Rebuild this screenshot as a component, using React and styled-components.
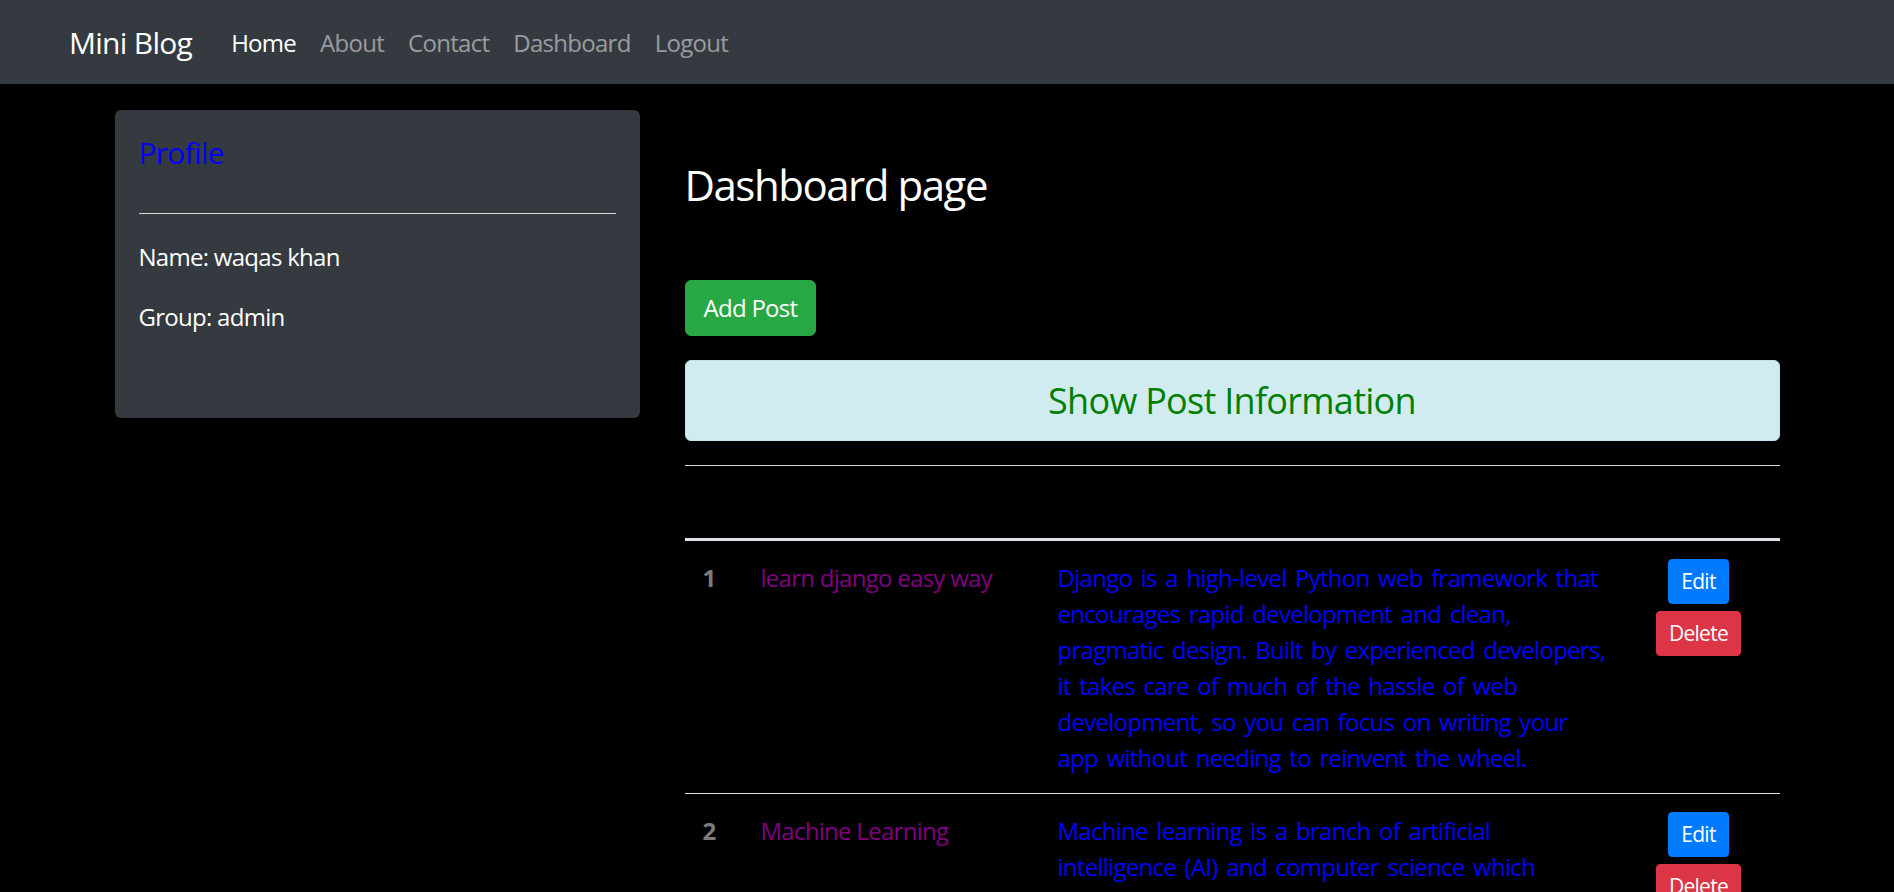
import React from 'react';
import styled, { createGlobalStyle } from 'styled-components';

const GlobalStyle = createGlobalStyle`
  html { scrollbar-width: none; }
  html::-webkit-scrollbar, body::-webkit-scrollbar { display: none; }
  html, body { margin: 0; padding: 0; background: #000; }
  body {
    font-family: "Open Sans", "Noto Sans", sans-serif;
    color: #fff;
    font-size: 24px;
    line-height: 1.5;
    letter-spacing: -0.03em;
  }
  * { box-sizing: border-box; }
`;

const Navbar = styled.nav`
  height: 84px;
  background: #343a40;
  display: flex;
  align-items: center;
  padding: 0 0 0 69px;
`;

const Brand = styled.a`
  font-size: 30px;
  line-height: 45px;
  color: #fff;
  text-decoration: none;
  margin-right: 27px;
`;

const NavList = styled.ul`
  display: flex;
  list-style: none;
  margin: 0;
  padding: 0;
`;

const NavLink = styled.a`
  display: block;
  padding: 13px 12px 11px;
  font-size: 24px;
  line-height: 36px;
  color: ${(p) => (p.$active ? '#fff' : 'rgba(255,255,255,0.5)')};
  text-decoration: none;
`;

const Container = styled.div`
  max-width: 1665px;
  margin: 0 auto;
  display: grid;
  grid-template-columns: 525px 1095px;
  column-gap: 45px;
  align-items: start;
`;

const ProfileCard = styled.section`
  margin-top: 26px;
  background: #343a40;
  border-radius: 6px;
  padding: 25px 24px 24px;
  height: 308px;
`;

const ProfileTitle = styled.h5`
  margin: 0;
  font-size: 30px;
  font-weight: 400;
  line-height: 36px;
  color: #0000ff;
`;

const Rule = styled.hr`
  border: 0;
  border-top: 1px solid #d6d6d6;
  margin: ${(p) => p.$margin || '24px 0'};
`;

const InfoLine = styled.p`
  margin: 0 0 24px;
  line-height: 36px;
  font-size: 24px;
`;

const Main = styled.main`
  padding-top: 76px;
`;

const PageTitle = styled.h3`
  margin: 0;
  font-size: 42px;
  font-weight: 400;
  line-height: 50px;
  letter-spacing: -0.035em;
`;

const AddButton = styled.a`
  display: block;
  width: fit-content;
  margin-top: 70px;
  padding: 9px 18px;
  border: 1px solid #28a745;
  border-radius: 6px;
  background: #28a745;
  color: #fff;
  font-size: 24px;
  line-height: 36px;
  text-decoration: none;
`;

const InfoAlert = styled.div`
  margin-top: 24px;
  background: #d1ecf1;
  border: 1px solid #bee5eb;
  border-radius: 6px;
  padding: 18px 30px;
  text-align: center;
`;

const AlertHeading = styled.h4`
  margin: 0;
  font-size: 36px;
  font-weight: 400;
  line-height: 43px;
  color: #008000;
`;

const PostTable = styled.table`
  width: 100%;
  border-collapse: collapse;
  table-layout: fixed;
`;

const HeadRow = styled.tr`
  height: 49px;
  border-bottom: 3px solid #dee2e6;
`;

const Row = styled.tr`
  border-top: ${(p) => (p.$first ? 'none' : '1px solid #dee2e6')};
`;

const Cell = styled.td`
  padding: 19px 18px 17px;
  vertical-align: top;
  font-size: 24px;
  line-height: 36px;
  color: ${(p) => p.$color || '#fff'};
`;

const DescCell = styled(Cell)`
  padding-right: 6px;
  word-spacing: 3px;
`;

const NumCell = styled.th`
  padding: 19px 18px 17px;
  vertical-align: top;
  font-size: 24px;
  line-height: 36px;
  font-weight: 700;
  color: #7c7c7c;
  text-align: left;
`;

const ActionCell = styled.td`
  padding: 18px;
  vertical-align: top;
  text-align: center;
`;

const SmallButton = styled.a`
  display: inline-block;
  padding: 6px 12px;
  border-radius: 4px;
  font-family: inherit;
  letter-spacing: inherit;
  font-size: 21px;
  line-height: 31px;
  color: #fff;
  text-decoration: none;
  background: ${(p) => p.$bg};
  border: 1px solid ${(p) => p.$bg};
  cursor: pointer;
`;

const DeleteForm = styled.form`
  margin: 7px 0 0;
  line-height: 0;
`;

const posts = [
  {
    id: 1,
    title: 'learn django easy way',
    desc: 'Django is a high-level Python web framework that encourages rapid development and clean, pragmatic design. Built by experienced developers, it takes care of much of the hassle of web development, so you can focus on writing your app without needing to reinvent the wheel.',
  },
  {
    id: 2,
    title: 'Machine Learning',
    desc: 'Machine learning is a branch of artificial intelligence (AI) and computer science which focuses on the use of data and algorithms to imitate the way that humans learn, gradually improving its accuracy.',
  },
];

export default function App() {
  return (
    <>
      <GlobalStyle />
      <Navbar>
        <Brand href="#">Mini Blog</Brand>
        <NavList>
          <li><NavLink href="#" $active>Home</NavLink></li>
          <li><NavLink href="#">About</NavLink></li>
          <li><NavLink href="#">Contact</NavLink></li>
          <li><NavLink href="#">Dashboard</NavLink></li>
          <li><NavLink href="#">Logout</NavLink></li>
        </NavList>
      </Navbar>
      <Container>
        <ProfileCard>
          <ProfileTitle>Profile</ProfileTitle>
          <Rule $margin="42px 0 25px" />
          <InfoLine>Name: waqas khan</InfoLine>
          <InfoLine>Group: admin</InfoLine>
        </ProfileCard>
        <Main>
          <PageTitle>Dashboard page</PageTitle>
          <AddButton href="#">Add Post</AddButton>
          <InfoAlert>
            <AlertHeading>Show Post Information</AlertHeading>
          </InfoAlert>
          <Rule />
          <PostTable>
            <colgroup>
              <col style={{ width: 58 }} />
              <col style={{ width: 297 }} />
              <col style={{ width: 578 }} />
              <col style={{ width: 162 }} />
            </colgroup>
            <thead>
              <HeadRow>
                <th />
                <th />
                <th />
                <th />
              </HeadRow>
            </thead>
            <tbody>
              {posts.map((p, i) => (
                <Row key={p.id} $first={i === 0}>
                  <NumCell scope="row">{p.id}</NumCell>
                  <Cell $color="#800080">{p.title}</Cell>
                  <DescCell $color="#0000ff">{p.desc}</DescCell>
                  <ActionCell>
                    <SmallButton href="#" $bg="#007bff">Edit</SmallButton>
                    <DeleteForm>
                      <SmallButton as="button" type="button" $bg="#dc3545">Delete</SmallButton>
                    </DeleteForm>
                  </ActionCell>
                </Row>
              ))}
            </tbody>
          </PostTable>
        </Main>
      </Container>
    </>
  );
}
